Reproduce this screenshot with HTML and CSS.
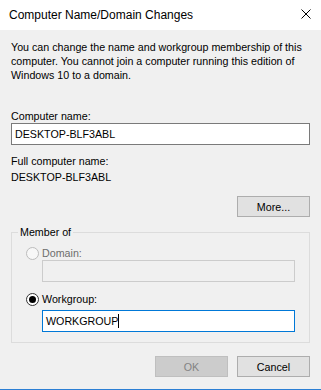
FILE: index.html
```html
<!DOCTYPE html>
<html lang="en">
<head>
    <meta charset="UTF-8">
    <title>Computer Name/Domain Changes</title>
    <link rel="stylesheet" href="styles.css">
</head>
<body>
    <div class="window">
        <div class="titlebar">
            <span class="title">Computer Name/Domain Changes</span>
            <svg class="close" width="10" height="10" viewBox="0 0 10 10">
                <path d="M0.5 0.5 L9.5 9.5 M9.5 0.5 L0.5 9.5" stroke="#000" stroke-width="1" fill="none"/>
            </svg>
        </div>

        <div class="content">
            <p class="intro">You can change the name and workgroup membership of this computer. You cannot join a computer running this edition of Windows 10 to a domain.</p>

            <div class="label name-label">Computer name:</div>
            <div class="textbox">DESKTOP-BLF3ABL</div>

            <div class="label full-label">Full computer name:</div>
            <div class="label full-value">DESKTOP-BLF3ABL</div>

            <div class="btn-row more-row">
                <span class="btn">More...</span>
            </div>

            <fieldset class="group">
                <legend>Member of</legend>
                <div class="group-body">
                    <div class="radio-row domain-row disabled">
                        <span class="radio"></span>
                        <span>Domain:</span>
                    </div>
                    <div class="textbox sub disabled"></div>

                    <div class="radio-row workgroup-row">
                        <span class="radio checked"></span>
                        <span>Workgroup:</span>
                    </div>
                    <div class="textbox sub focused">WORKGROUP<span class="caret"></span></div>
                </div>
            </fieldset>

            <div class="btn-row footer">
                <span class="btn disabled">OK</span>
                <span class="btn">Cancel</span>
            </div>
        </div>
    </div>
</body>
</html>
```

FILE: styles.css
```css
body {
    margin: 0;
    font-family: "Liberation Sans", Arial, sans-serif;
    font-size: 10.7px;
    line-height: 14px;
    color: #000;
    background-color: #f0f0f0;
}

.window {
    width: 321px;
    height: 390px;
    box-sizing: border-box;
    border-bottom: 1px solid #2b7fd4;
    background-color: #f0f0f0;
}

.titlebar {
    height: 30px;
    background-color: #ffffff;
    display: flex;
    align-items: center;
    justify-content: space-between;
    padding: 0 10px 0 9px;
}

.title {
    font-size: 12px;
}

.close {
    display: block;
    margin-top: -2px;
}

.content {
    padding: 0 11px;
}

.intro {
    margin: 10px 0 0 0;
}

.label {
    white-space: nowrap;
}

.name-label {
    margin-top: 27px;
}

.textbox {
    height: 22px;
    box-sizing: border-box;
    border: 1px solid #7a7a7a;
    background-color: #ffffff;
    padding: 3px 3px;
    white-space: nowrap;
}

.full-label {
    margin-top: 9px;
}

.full-value {
    margin-top: 2px;
}

.btn-row {
    display: flex;
    justify-content: flex-end;
    gap: 9px;
}

.more-row {
    margin-top: 12px;
}

.btn {
    width: 73px;
    height: 21px;
    box-sizing: border-box;
    border: 1px solid #adadad;
    background-color: #e1e1e1;
    display: flex;
    align-items: center;
    justify-content: center;
}

.btn.disabled {
    border-color: #bfbfbf;
    background-color: #cccccc;
    color: #838383;
}

.group {
    margin: 8px 0 0 0;
    padding: 0 14px 10px 6px;
    border: 1px solid #dcdcdc;
    min-width: 0;
}

.group legend {
    padding: 0 2px;
}

.group-body {
    padding-left: 8px;
}

.radio-row {
    display: flex;
    align-items: center;
    gap: 3px;
    height: 14px;
}

.domain-row {
    margin-top: 7px;
}

.workgroup-row {
    margin-top: 10px;
}

.radio {
    width: 13px;
    height: 13px;
    box-sizing: border-box;
    border: 1px solid #333333;
    border-radius: 50%;
    background-color: #ffffff;
    display: flex;
    align-items: center;
    justify-content: center;
}

.radio.checked::after {
    content: "";
    width: 7px;
    height: 7px;
    border-radius: 50%;
    background-color: #000;
}

.radio-row.disabled {
    color: #6d6d6d;
}

.radio-row.disabled .radio {
    border-color: #bcbcbc;
    background-color: #f7f7f7;
}

.textbox.sub {
    margin-left: 16px;
}

.textbox.disabled {
    border-color: #cccccc;
    background-color: #f0f0f0;
}

.textbox.focused {
    margin-top: 4px;
    border-color: #0078d7;
}

.caret {
    display: inline-block;
    width: 1px;
    height: 14px;
    background-color: #000;
    vertical-align: top;
}

.footer {
    margin-top: 13px;
}
```
